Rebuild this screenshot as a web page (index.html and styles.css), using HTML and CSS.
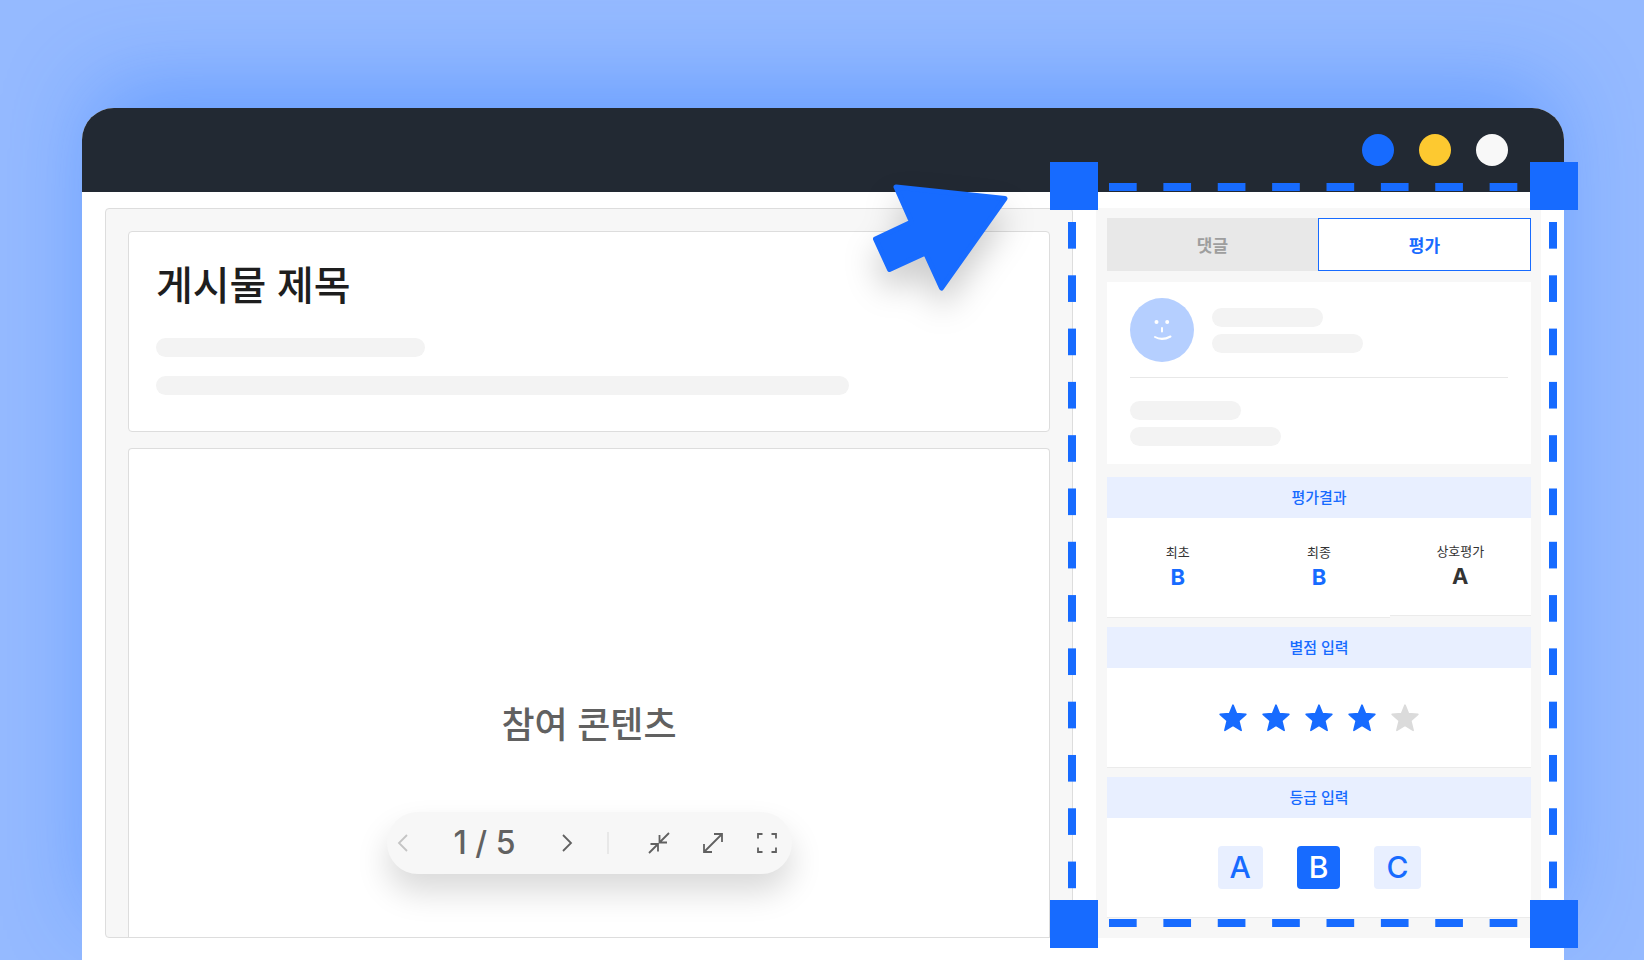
FILE: index.html
```
<!DOCTYPE html>
<html lang="ko">

<head>
  <meta charset="UTF-8">
  <meta name="viewport" content="width=device-width, initial-scale=1.0">
  <title>게시물 평가</title>
  <link rel="stylesheet" href="styles.css">
</head>

<body>
  <div class="window">
    <header class="titlebar">
      <span class="dot blue"></span>
      <span class="dot yellow"></span>
      <span class="dot white"></span>
    </header>

    <div class="window-body">
      <main class="post">
        <section class="post-head">
          <h1>게시물 제목</h1>
          <div class="bar bar-medium"></div>
          <div class="bar bar-long"></div>
        </section>

        <section class="content">
          <h2>참여 콘텐츠</h2>
          <div class="toolbar">
            <button type="button" aria-label="이전" disabled>
              <svg width="24" height="24" viewBox="0 0 24 24"><path d="M16 4L8 12L16 20" /></svg>
            </button>
            <span class="page">1 / 5</span>
            <button type="button" aria-label="다음" class="next">
              <svg width="24" height="24" viewBox="0 0 24 24"><path d="M8 4L16 12L8 20" /></svg>
            </button>
            <span class="divider"></span>
            <div class="tools">
              <button type="button" aria-label="축소">
                <svg width="24" height="24" viewBox="0 0 24 24"><path d="M22 2L12.5 11.500M12.500 4V11.500H20M2 22L11 13M3.500 13H11V20.500" /></svg>
              </button>
              <button type="button" aria-label="확대">
                <svg width="24" height="24" viewBox="0 0 24 24"><path d="M3 21L21 3M13 3H21V11M3 13V21H11" /></svg>
              </button>
              <button type="button" aria-label="전체 화면">
                <svg width="24" height="24" viewBox="0 0 24 24"><path d="M3 7.500V3H7.500M16.500 3H21V7.500M21 16.500V21H16.500M7.500 21H3V16.500" /></svg>
              </button>
            </div>
          </div>
        </section>

        <svg class="cursor" width="136" height="108" viewBox="0 0 136 108">
          <path d="M24 3L133 14.500L69.500 104L53.500 69L17.500 85.500L3.500 55L39.500 38Z" />
        </svg>
      </main>

      <aside class="side">
        <div class="tabs" role="tablist">
          <button type="button" role="tab" aria-selected="false">댓글</button>
          <button type="button" role="tab" aria-selected="true" class="active">평가</button>
        </div>

        <section class="profile">
          <div class="user">
            <svg class="avatar" width="64" height="64" viewBox="0 0 64 64">
              <circle cx="32" cy="32" r="32" fill="#b5cfff" />
              <circle cx="26.500" cy="24" r="2" fill="#fff" />
              <circle cx="37.200" cy="24" r="2" fill="#fff" />
              <path d="M32 30V33.500M25 39Q32 43 40.500 38.500" fill="none" stroke="#fff" stroke-width="2" stroke-linecap="round" />
            </svg>
            <div class="bars">
              <div class="bar bar-short"></div>
              <div class="bar"></div>
            </div>
          </div>
          <div class="bars">
            <div class="bar bar-short"></div>
            <div class="bar"></div>
          </div>
        </section>

        <section class="panel">
          <h3>평가결과</h3>
          <div class="results">
            <div class="result">
              <span>최초</span>
              <strong>B</strong>
            </div>
            <div class="result">
              <span>최종</span>
              <strong>B</strong>
            </div>
            <div class="result peer">
              <span>상호평가</span>
              <strong>A</strong>
            </div>
          </div>
        </section>

        <section class="panel">
          <h3>별점 입력</h3>
          <div class="panel-body stars">
            <button type="button" aria-label="1점"><svg width="30" height="30" viewBox="0 0 28 28"><use href="#star" /></svg></button>
            <button type="button" aria-label="2점"><svg width="30" height="30" viewBox="0 0 28 28"><use href="#star" /></svg></button>
            <button type="button" aria-label="3점"><svg width="30" height="30" viewBox="0 0 28 28"><use href="#star" /></svg></button>
            <button type="button" aria-label="4점"><svg width="30" height="30" viewBox="0 0 28 28"><use href="#star" /></svg></button>
            <button type="button" aria-label="5점" class="off"><svg width="30" height="30" viewBox="0 0 28 28"><use href="#star" /></svg></button>
          </div>
        </section>

        <section class="panel">
          <h3>등급 입력</h3>
          <div class="panel-body grades">
            <button type="button">A</button>
            <button type="button" class="active">B</button>
            <button type="button">C</button>
          </div>
        </section>

        <!-- selection frame over the side panel -->
        <div class="selection">
          <span class="edge top"></span>
          <span class="edge bottom"></span>
          <span class="edge left"></span>
          <span class="edge right"></span>
          <span class="handle top-left"></span>
          <span class="handle top-right"></span>
          <span class="handle bottom-left"></span>
          <span class="handle bottom-right"></span>
        </div>
      </aside>
    </div>
  </div>

  <svg class="defs" width="0" height="0">
    <symbol id="star" viewBox="0 0 28 28">
      <path d="M14 2L17.200 9.900L26 10.600L19.400 16.500L21.600 25.500L14 20.900L6.400 25.500L8.600 16.500L2 10.600L10.800 9.900Z" stroke="currentColor" stroke-width="1.500" stroke-linejoin="round" />
    </symbol>
  </svg>
</body>

</html>
```

FILE: styles.css
```
* {
  box-sizing: border-box;
  margin: 0;
  padding: 0;
}

body {
  display: flex;
  min-height: 100vh;
  padding: 108px 80px 0 82px;
  overflow: hidden;
  background: #95baff;
  color: #1e1e1e;
  font-family: Inter, "Noto Sans CJK KR", sans-serif;
  font-size: 16px;
}

button {
  border: 0;
  background: none;
  font-family: inherit;
  cursor: pointer;
}

svg {
  display: block;
}

.window {
  display: flex;
  flex-direction: column;
  flex: 1;
  border-radius: 32px 32px 0 0;
  background: #fff;
  box-shadow: 0 -32px 90px -12px rgba(23, 107, 255, .38);
}

.titlebar {
  display: flex;
  align-items: center;
  justify-content: flex-end;
  gap: 25px;
  height: 84px;
  padding: 0 56px;
  border-radius: 32px 32px 0 0;
  background: #222933;
}

.dot {
  width: 32px;
  height: 32px;
  border-radius: 50%;
}

.blue {
  background: #176bff;
}

.yellow {
  background: #fdc930;
}

.white {
  background: #f8f8f8;
}

.window-body {
  display: flex;
  flex: 1;
  gap: 23px;
  padding: 16px 23px 22px;
}

/* left side */
.post {
  position: relative;
  display: flex;
  flex: 1;
  flex-direction: column;
  gap: 16px;
  padding: 22px 22px 0;
  border: 1px solid #ddd;
  border-radius: 4px;
  background: #f7f7f7;
}

.post-head {
  display: flex;
  flex-direction: column;
  gap: 19px;
  padding: 30px 27px 36px;
  border: 1px solid #ddd;
  border-radius: 4px;
  background: #fff;
}

.post-head h1 {
  margin-bottom: 9px;
  font-size: 40px;
  font-weight: 500;
  line-height: 48px;
}

.bar {
  width: 151px;
  height: 19px;
  border-radius: 10px;
  background: #f3f3f3;
}

.bar-short {
  width: 111px;
}

.bar-medium {
  width: 269px;
}

.bar-long {
  width: 80%;
}

.content {
  display: flex;
  flex: 1;
  flex-direction: column;
  align-items: center;
  justify-content: flex-end;
  gap: 65px;
  padding-bottom: 63px;
  border: 1px solid #ddd;
  border-bottom: 0;
  border-radius: 4px 4px 0 0;
  background: #fff;
}

.content h2 {
  color: #616161;
  font-size: 36px;
  font-weight: 500;
  line-height: 44px;
}

.toolbar {
  display: flex;
  align-items: center;
  height: 62px;
  padding-right: 9px;
  border-radius: 31px;
  background: #f7f7f7;
  box-shadow: 0 18px 32px rgba(0, 0, 0, .15);
}

.toolbar button {
  display: flex;
  justify-content: center;
  width: 32px;
  color: #616161;
}

.toolbar button:disabled {
  color: #c4c4c4;
}

.toolbar path {
  fill: none;
  stroke: currentColor;
  stroke-width: 1.8;
}

.page {
  width: 132px;
  color: #616161;
  font-size: 32px;
  font-weight: 500;
  line-height: 40px;
  text-align: center;
}

.divider {
  width: 2px;
  height: 22px;
  margin: 0 34px 0 24px;
  background: #e8e8e8;
}

.tools {
  display: flex;
  gap: 22px;
}

.cursor {
  position: absolute;
  top: -25px;
  right: 64px;
  overflow: visible;
  fill: #176bff;
  stroke: #176bff;
  stroke-width: 5;
  stroke-linejoin: round;
  filter: drop-shadow(0 18px 16px rgba(0, 0, 0, .2));
}

/* right side */
.side {
  position: relative;
  display: flex;
  flex-direction: column;
  gap: 10px;
  width: 445px;
  padding: 10px 10px 20px 11px;
  background: #f7f7f7;
}

.tabs {
  display: flex;
  height: 53px;
}

.tabs button {
  flex: 1;
  background: #e8e8e8;
  color: #9e9e9e;
  font-size: 17px;
  font-weight: 700;
}

.tabs .active {
  border: 1px solid #176bff;
  background: #fff;
  color: #176bff;
}

.profile {
  margin: 1px 0 3px;
  padding: 16px 23px 18px;
  background: #fff;
}

.user {
  display: flex;
  align-items: center;
  gap: 18px;
  margin-bottom: 23px;
  padding-bottom: 15px;
  border-bottom: 1px solid #e8e8e8;
}

.bars {
  display: flex;
  flex-direction: column;
  gap: 7px;
}

.panel h3 {
  background: #e8efff;
  color: #176bff;
  font-size: 15px;
  font-weight: 500;
  line-height: 41px;
  text-align: center;
}

.panel-body {
  display: flex;
  align-items: center;
  justify-content: center;
  height: 99px;
  background: #fff;
  box-shadow: 0 1px #ebebeb;
}

.results {
  display: flex;
  align-items: flex-start;
  height: 99px;
}

.result {
  display: flex;
  flex: 1;
  flex-direction: column;
  align-items: center;
  justify-content: center;
  height: 99px;
  padding-bottom: 4px;
  background: #fff;
  box-shadow: 0 1px #ebebeb;
  color: #333;
}

.result span {
  font-size: 13px;
  line-height: 22px;
}

.result strong {
  color: #176bff;
  font-size: 22px;
  line-height: 28px;
}

.peer {
  height: 97px;
}

.peer strong {
  color: #333;
}

.stars {
  gap: 13px;
}

.stars button {
  color: #176bff;
  fill: currentColor;
}

.stars .off {
  color: #dbdbdb;
}

.grades {
  gap: 34px;
}

.grades button {
  padding: 0 12px;
  border-radius: 4px;
  background: #e8efff;
  color: #176bff;
  font-size: 30px;
  font-weight: 500;
  line-height: 43px;
}

.grades .active {
  background: #176bff;
  color: #fff;
}

.selection {
  position: absolute;
  top: -46px;
  right: -37px;
  bottom: -10px;
  left: -46px;
  pointer-events: none;
}

.handle {
  position: absolute;
  width: 48px;
  height: 48px;
  background: #176bff;
}

.top-left {
  top: 0;
  left: 0;
}

.top-right {
  top: 0;
  right: 0;
}

.bottom-left {
  bottom: 0;
  left: 0;
}

.bottom-right {
  right: 0;
  bottom: 0;
}

.edge {
  position: absolute;
}

.edge.top,
.edge.bottom {
  right: 34px;
  left: 59px;
  height: 8px;
  background: linear-gradient(to right, #176bff 50%, transparent 50%) 0 0 / 54px 8px round;
}

.edge.top {
  top: 21px;
}

.edge.bottom {
  bottom: 21px;
}

.edge.left,
.edge.right {
  top: 60px;
  bottom: 33px;
  width: 8px;
  background: linear-gradient(#176bff 50%, transparent 50%) 0 0 / 8px 53px round;
}

.edge.left {
  left: 18px;
}

.edge.right {
  right: 21px;
}

.defs {
  position: absolute;
}
```
